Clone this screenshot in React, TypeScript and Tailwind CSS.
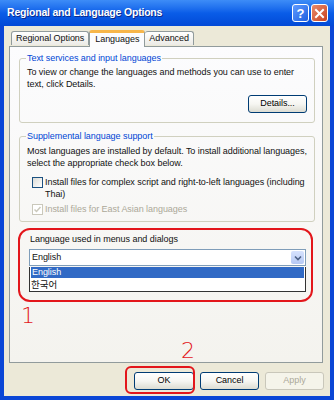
import React from 'react';

const XpButton: React.FC<{ label: string; disabled?: boolean; className?: string }> = ({ label, disabled, className }) => (
  <div
    className={`flex items-center justify-center h-[18px] rounded-[3px] border text-[9px] ${
      disabled
        ? 'border-[#c9c7ba] bg-[#f5f4ea] text-[#aca899]'
        : 'border-[#003c74] bg-gradient-to-b from-white via-[#f6f6f2] to-[#dcdcd2] text-black'
    } ${className ?? ''}`}
  >
    {label}
  </div>
);

const GroupBox: React.FC<{ title: string; className?: string; children: React.ReactNode }> = ({ title, className, children }) => (
  <fieldset className={`border border-[#d0d0bf] rounded-[3px] px-[7px] ${className ?? ''}`}>
    <legend className="ml-[-1px] px-[1px] text-[#0046d5] leading-[12px]">{title}</legend>
    {children}
  </fieldset>
);

export default function App() {
  return (
    <div className="relative w-[334px] h-[400px] bg-[#0a46d6] flex flex-col overflow-hidden font-['Liberation_Sans',Arial,sans-serif] text-[9px] tracking-[-0.05px] text-[#111]">
      {/* Title bar */}
      <div className="h-[26px] shrink-0 flex items-center pl-[7px] pr-[6px] bg-gradient-to-b from-[#3d8cf7] via-[#0a5de8] to-[#0349d6]">
        <span className="text-white font-bold text-[10.5px] tracking-[-0.2px] [text-shadow:1px_1px_0_#0b2b8c]">
          Regional and Language Options
        </span>
        <div className="ml-auto flex gap-[2px]">
          <div className="w-[17px] h-[18px] rounded-[3px] border border-white bg-gradient-to-br from-[#5f9bff] to-[#1e5fe0] flex items-center justify-center text-white font-bold text-[13px] leading-none">
            ?
          </div>
          <div className="w-[17px] h-[18px] rounded-[3px] border border-white bg-gradient-to-br from-[#e88a6a] to-[#c8401c] flex items-center justify-center">
            <svg width="11" height="11" viewBox="0 0 11 11">
              <path d="M2 2 L9 9 M9 2 L2 9" stroke="white" strokeWidth="2" strokeLinecap="square" />
            </svg>
          </div>
        </div>
      </div>

      {/* Body */}
      <div className="flex-1 mx-[4px] mb-[4px] bg-[#ece9d8] flex flex-col">
        {/* Tabs */}
        <div className="h-[20px] flex items-end pl-[7px] relative z-10">
          <div className="h-[14px] px-[4px] flex items-center border border-b-0 border-[#919b9c] rounded-t-[3px] bg-gradient-to-b from-white to-[#ecebe6] mb-[1px]">
            Regional Options
          </div>
          <div className="h-[17px] px-[5px] flex items-center bg-[#fcfcfe] border-x border-[#919b9c] border-t-[3px] border-t-[#f7b64a] rounded-t-[3px] -mb-[1px]">
            Languages
          </div>
          <div className="h-[14px] px-[4px] flex items-center border border-b-0 border-l-0 border-[#919b9c] rounded-t-[3px] bg-gradient-to-b from-white to-[#ecebe6] mb-[1px]">
            Advanced
          </div>
        </div>

        {/* Panel */}
        <div className="ml-[5px] w-[314px] h-[317px] border border-[#919b9c] bg-gradient-to-b from-[#fcfcfe] to-[#f4f3ee] flex flex-col pl-[9px] pt-[5px]">
          <GroupBox title="Text services and input languages" className="w-[296px] pb-[9px]">
            <p className="leading-[12px] pt-[2px]">
              To view or change the languages and methods you can use to enter text, click Details.
            </p>
            <div className="flex justify-end mt-[5px]">
              <XpButton label="Details..." className="w-[59px] h-[17px]" />
            </div>
          </GroupBox>

          <GroupBox title="Supplemental language support" className="w-[296px] mt-[7px] pb-[6px]">
            <p className="leading-[12px] pt-[3px]">
              Most languages are installed by default. To install additional languages, select the appropriate check box below.
            </p>
            <div className="flex mt-[7px] ml-[5px]">
              <div className="w-[11px] h-[11px] mt-[1px] border border-[#1c5180] bg-gradient-to-br from-[#dcdcd7] to-white shrink-0" />
              <span className="ml-[2px] leading-[12px]">
                Install files for complex script and right-to-left languages (including Thai)
              </span>
            </div>
            <div className="flex mt-[3px] ml-[5px] items-center">
              <div className="w-[11px] h-[11px] border border-[#cac8bb] bg-white shrink-0 flex items-center justify-center">
                <svg width="9" height="9" viewBox="0 0 9 9">
                  <path d="M1.5 4.5 L3.5 6.5 L7.5 2" stroke="#cac8bb" strokeWidth="1.5" fill="none" />
                </svg>
              </div>
              <span className="ml-[2px] leading-[12px] text-[#aca899]">Install files for East Asian languages</span>
            </div>
          </GroupBox>

          {/* Language used in menus */}
          <div className="mt-[11px] ml-[11px] leading-[12px]">Language used in menus and dialogs</div>
          <div className="mt-[4px] ml-[10px] w-[277px]">
            <div className="h-[17px] border border-[#7f9db9] bg-white flex items-center pl-[2px] pr-[1px]">
              <span>English</span>
              <div className="ml-auto w-[13px] h-[13px] rounded-[2px] bg-gradient-to-b from-[#d6e2fd] to-[#b6c9f4] flex items-center justify-center">
                <svg width="8" height="6" viewBox="0 0 8 6">
                  <path d="M1 1.5 L4 4.5 L7 1.5" stroke="#4d6185" strokeWidth="1.6" fill="none" />
                </svg>
              </div>
            </div>
            <div className="border border-t-0 border-[#333] bg-white">
              <div className="h-[11px] leading-[11px] bg-[#316ac5] text-white pl-[1px] mx-[1px] mt-[1px]">English</div>
              <div className="h-[13px] leading-[13px] pl-[1px] font-['Noto_Sans_CJK_KR',sans-serif] text-[9.5px]">한국어</div>
            </div>
          </div>
        </div>

        {/* Buttons */}
        <div className="flex justify-end gap-[6px] mt-[9px] pr-[6px]">
          <XpButton label="OK" className="w-[60px]" />
          <XpButton label="Cancel" className="w-[59px]" />
          <XpButton label="Apply" disabled className="w-[59px]" />
        </div>
      </div>

      {/* Annotations */}
      <div className="absolute left-[18px] top-[228px] w-[295px] h-[74px] border-2 border-[#e3161b] rounded-[12px]" />
      <div className="absolute left-[21px] top-[305px] text-[#e3161b] text-[22px] font-['DejaVu_Sans',sans-serif] font-extralight leading-none">1</div>
      <div className="absolute left-[181px] top-[340px] text-[#e3161b] text-[22px] font-['DejaVu_Sans',sans-serif] font-extralight leading-none">2</div>
      <div className="absolute left-[125px] top-[366px] w-[70px] h-[28px] border-2 border-[#e3161b] rounded-[6px]" />
    </div>
  );
}
